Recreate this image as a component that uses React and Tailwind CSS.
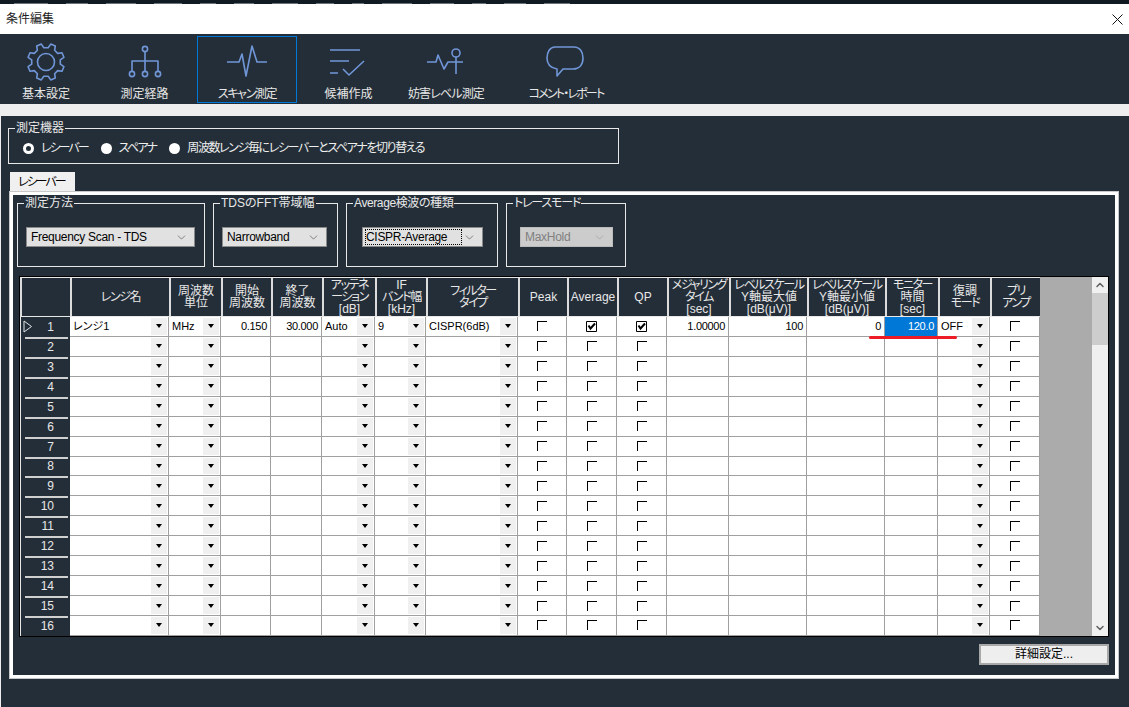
import { ChevronDown, ChevronUp } from "lucide-react"

const COLUMNS = [
  { w: "w-[99px]", head: ["レンジ名"], type: "drop" },
  { w: "w-[52px]", head: ["周波数", "単位"], type: "drop" },
  { w: "w-[50px]", head: ["開始", "周波数"], type: "text" },
  { w: "w-[51px]", head: ["終了", "周波数"], type: "text" },
  { w: "w-[53px]", head: ["アッテネ", "ーション", "[dB]"], type: "drop" },
  { w: "w-[51px]", head: ["IF", "バンド幅", "[kHz]"], type: "drop" },
  { w: "w-[92px]", head: ["フィルター", "タイプ"], type: "drop" },
  { w: "w-[49px]", head: ["Peak"], type: "check" },
  { w: "w-[50px]", head: ["Average"], type: "check" },
  { w: "w-[50px]", head: ["QP"], type: "check" },
  { w: "w-[62px]", head: ["メジャリング", "タイム", "[sec]"], type: "text" },
  { w: "w-[78px]", head: ["レベルスケール", "Y軸最大値", "[dB(μV)]"], type: "text" },
  { w: "w-[78px]", head: ["レベルスケール", "Y軸最小値", "[dB(μV)]"], type: "text" },
  { w: "w-[53px]", head: ["モニター", "時間", "[sec]"], type: "text" },
  { w: "w-[52px]", head: ["復調", "モード"], type: "drop" },
  { w: "w-[50px]", head: ["プリ", "アンプ"], type: "check" },
]

const FIRST_ROW = [
  "レンジ1", "MHz", "0.150", "30.000", "Auto", "9", "CISPR(6dB)", false, true, true,
  "1.00000", "100", "0", "120.0", "OFF", false,
]

const ROWS = Array.from({ length: 16 }, (_, i) => i + 1)
const TICKS = [34, 22, 30, 28, 16, 20, 26, 18, 12, 30, 24, 14, 22, 26]

// header lines with katakana are narrower in the picture
const headTrack = (line) => (/[ァ-ヶー]/.test(line) ? "tracking-[-1.4px]" : "")

const gearPath = (() => {
  const cx = 45, cy = 62
  const pts = []
  for (let i = 0; i < 8; i++) {
    const a = (i * Math.PI) / 4 - Math.PI / 8
    const step = Math.PI / 8
    const add = (r, t) => pts.push(`${(cx + r * Math.cos(t)).toFixed(1)} ${(cy + r * Math.sin(t)).toFixed(1)}`)
    add(14.5, a - step * 0.62)
    add(18.5, a - step * 0.34)
    add(18.5, a + step * 0.34)
    add(14.5, a + step * 0.62)
  }
  return "M" + pts.join("L") + "Z"
})()

function Icon({ box, children }) {
  return (
    <svg
      width="48"
      height="44"
      viewBox={box}
      fill="none"
      stroke="#7096d8"
      strokeWidth="1.6"
      strokeLinejoin="round"
      className="shrink-0"
    >
      {children}
    </svg>
  )
}

const TOOLS = [
  {
    label: "基本設定",
    w: "w-[92px]",
    track: "",
    icon: (
      <Icon box="21 40 48 44">
        <path d={gearPath} />
        <circle cx="45" cy="62" r="8.5" />
      </Icon>
    ),
  },
  {
    label: "測定経路",
    w: "w-[105px]",
    track: "",
    icon: (
      <Icon box="121 40 48 44">
        <circle cx="145" cy="49" r="2.6" />
        <circle cx="132" cy="74" r="2.6" />
        <circle cx="145" cy="74" r="2.6" />
        <circle cx="158" cy="74" r="2.6" />
        <path d="M145 52V71M132 71V61H158V71" />
      </Icon>
    ),
  },
  {
    label: "スキャン測定",
    w: "w-[100px]",
    track: "tracking-[-1.4px]",
    active: true,
    icon: (
      <Icon box="221 40 48 44">
        <path d="M225 62H237L240 54L244 76L250 46L255 62H265" />
      </Icon>
    ),
  },
  {
    label: "候補作成",
    w: "w-[103px]",
    track: "",
    icon: (
      <Icon box="325 40 48 44">
        <path d="M330 50H360M330 61H349M330 73H338M343 69L349 75L364 61" />
      </Icon>
    ),
  },
  {
    label: "妨害レベル測定",
    w: "w-[92px]",
    track: "tracking-[-0.85px]",
    icon: (
      <Icon box="422 40 48 44">
        <circle cx="456" cy="53" r="4" />
        <path d="M427 62H436L438 55L444 69L448 62H463M456 57V74" />
      </Icon>
    ),
  },
  {
    label: "コメント・レポート",
    w: "w-[148px]",
    track: "tracking-[-1.8px]",
    icon: (
      <Icon box="542 40 48 44">
        <path d="M555 47H574C580 47 583 52 583 58C583 65 579 69 573 69H563L557 76V69C551 68 547 64 547 58C547 52 550 47 555 47Z" />
      </Icon>
    ),
  },
]

function ToolItem({ tool }) {
  return (
    <div className={`${tool.w} flex flex-col items-center`}>
      <div
        className={`w-full h-[67px] mt-[2px] flex flex-col items-center border ${
          tool.active ? "border-[#0078d7]" : "border-transparent"
        }`}
      >
        <div className="mt-[3px]">{tool.icon}</div>
        <span className={`text-[12px] leading-[14px] text-[#e6e6e6] whitespace-nowrap mt-[3px] ${tool.track}`}>{tool.label}</span>
      </div>
    </div>
  )
}

function Group({ title, track, className, children }) {
  return (
    <fieldset className={`border border-[#e8e8e8] min-w-0 ${className}`}>
      <legend className={`ml-[6px] text-[12px] leading-[14px] text-[#e8e8e8] px-px ${track || ""}`}>{title}</legend>
      {children}
    </fieldset>
  )
}

function Radio({ label, selected, track }) {
  return (
    <label className="flex items-center gap-[7px] text-[12px] leading-[14px] text-[#eeeeee] whitespace-nowrap">
      <span
        className={`w-[11px] h-[11px] rounded-full ${
          selected ? "border-[3px] border-white bg-[#242e38]" : "bg-white"
        }`}
      />
      <span className={track}>{label}</span>
    </label>
  )
}

function Select({ value, className, focused, disabled }) {
  return (
    <div
      className={`h-[20px] flex items-center justify-between pl-[4px] pr-[6px] border text-[12px] tracking-[-0.3px] whitespace-nowrap ${className} ${
        disabled ? "bg-[#cccccc] border-[#bbbbbb] text-[#808080]" : "bg-[#e1e1e1] border-[#8a8a8a] text-black"
      }`}
    >
      <span className={focused ? "border border-dotted border-black leading-[14px] pr-[14px] -ml-[2px]" : ""}>{value}</span>
      <ChevronDown size={13} strokeWidth={1.3} className={disabled ? "text-[#a0a0a0]" : "text-[#555555]"} />
    </div>
  )
}

function DropButton() {
  return (
    <span className="absolute right-px top-px bottom-px w-[16px] bg-[#f0f0f0] flex items-center justify-center">
      <span className="w-0 h-0 border-x-[3.5px] border-t-[4px] border-x-transparent border-t-black" />
    </span>
  )
}

function CheckMark({ checked }) {
  if (checked) {
    return (
      <svg width="11" height="11" viewBox="0 0 11 11" fill="none" stroke="black">
        <path d="M0.5 10.5V0.5H10.5V10.5H0.5Z" strokeWidth="1" />
        <path d="M2.5 4.5L4.5 7.5L9 2.5" strokeWidth="2" />
      </svg>
    )
  }
  return <span className="block w-[10px] h-[10px] border-t border-l border-black" />
}

function Cell({ col, value, selected }) {
  const base = `${col.w} h-full shrink-0 border-r border-b border-[#a0a0a0] relative text-[11px] leading-[19px] whitespace-nowrap`
  if (col.type === "check") {
    return (
      <div className={`${base} bg-white flex items-center justify-center`}>
        <CheckMark checked={value === true} />
      </div>
    )
  }
  if (col.type === "drop") {
    return (
      <div className={`${base} bg-white text-black pl-[3px]`}>
        {value}
        <DropButton />
      </div>
    )
  }
  return (
    <div className={`${base} text-right pr-[3px] tracking-[-0.3px] ${selected ? "bg-[#0078d7] text-white" : "bg-white text-black"}`}>
      {value}
    </div>
  )
}

function GridTable() {
  return (
    <div className="relative ml-[6px] mt-[9px] w-[1090px] h-[361px] border border-black flex bg-[#ababab]">
      <div className="w-[1020px] shrink-0 flex flex-col">
        <div className="h-[40px] flex bg-[#242e38] border-t border-b border-[#e8e8e8] text-[#e8e8e8] text-[12px] leading-[12px]">
          <div className="w-[50px] shrink-0 border-l-2 border-[#dcdcdc]" />
          {COLUMNS.map((col, i) => (
            <div key={i} className={`${col.w} shrink-0 border-l-2 border-[#dcdcdc] flex flex-col items-center justify-center whitespace-nowrap`}>
              {col.head.map((line) => (
                <span key={line} className={headTrack(line)}>{line}</span>
              ))}
            </div>
          ))}
        </div>
        {ROWS.map((row) => (
          <div key={row} className="h-[20px] flex">
            <div className="w-[50px] h-full shrink-0 bg-[#242e38] border-l border-[#e8e8e8] relative flex items-center justify-end pr-[16px] text-[12px] text-[#e8e8e8]">
              {row > 1 && <span className="absolute left-[4px] right-[2px] top-0 h-[2px] bg-[#d0d0d0]" />}
              {row === 1 && (
                <svg width="10" height="13" viewBox="0 0 10 13" fill="none" stroke="#dfe3e6" className="absolute left-[2px] top-[3px]">
                  <path d="M1 1L8.5 6.5L1 12Z" />
                </svg>
              )}
              {row}
            </div>
            {COLUMNS.map((col, i) => (
              <Cell key={i} col={col} value={row === 1 ? FIRST_ROW[i] : ""} selected={row === 1 && i === 13} />
            ))}
          </div>
        ))}
      </div>
      <div className="flex-1" />
      <div className="w-[16px] shrink-0 bg-[#f0f0f0] flex flex-col items-center">
        <div className="h-[16px] flex items-center justify-center">
          <ChevronUp size={12} strokeWidth={3} className="text-[#606060]" />
        </div>
        <div className="w-full h-[52px] bg-[#cdcdcd]" />
        <div className="flex-1" />
        <div className="h-[16px] flex items-center justify-center">
          <ChevronDown size={12} strokeWidth={3} className="text-[#606060]" />
        </div>
      </div>
      {/* red marker drawn over the first row */}
      <span className="absolute left-[849px] top-[59px] w-[88px] h-[3px] rounded-full bg-[#ed1c24]" />
    </div>
  )
}

export default function App() {
  return (
    <div className="w-[1129px] h-[707px] overflow-hidden flex flex-col bg-[#242e38] font-['Liberation_Sans','Noto_Sans_CJK_JP',sans-serif] [font-feature-settings:'palt']">
      <div className="h-[4px] bg-[#101a22] flex items-end gap-[18px] pl-[14px]">
        {TICKS.map((w, i) => (
          <span key={i} style={{ width: w }} className="h-px bg-[#6b7278]" />
        ))}
      </div>

      <div className="h-[30px] bg-white flex items-center justify-between pl-[6px] pr-[6px]">
        <span className="text-[12px] text-[#222222]">条件編集</span>
        <svg width="11" height="11" viewBox="0 0 11 11" stroke="#111111" strokeWidth="1">
          <path d="M0.5 0.5L10.5 10.5M10.5 0.5L0.5 10.5" />
        </svg>
      </div>

      <div className="h-[70px] bg-[#242e38] flex">
        {TOOLS.map((tool) => (
          <ToolItem key={tool.label} tool={tool} />
        ))}
      </div>

      <div className="h-[12px] bg-[#eeeeee]" />

      <div className="flex-1 border-l border-[#eeeeee] pl-[7px] pt-[5px]">
        <Group title="測定機器" className="w-[611px] h-[43px]">
          <div className="flex gap-[13px] pl-[14px] pt-[6px]">
            <Radio label="レシーバー" selected track="tracking-[-2px]" />
            <Radio label="スペアナ" track="tracking-[-1.7px]" />
            <Radio label="周波数レンジ毎にレシーバーとスペアナを切り替える" track="tracking-[-1.4px]" />
          </div>
        </Group>

        <div className="ml-[2px] mt-[8px] w-[65px] h-[20px] bg-[#f0f0f0] text-[12px] leading-[20px] tracking-[-2px] text-left pl-[8px] text-black">
          レシーバー
        </div>

        <div className="ml-[2px] w-[1108px] h-[486px] border-[3px] border-white shadow-[0_0_0_1px_#c8c8c8] pt-px">
          <div className="flex gap-[8px] pl-[4px]">
            <Group title="測定方法" className="w-[188px] h-[71px]">
              <Select value="Frequency Scan - TDS" className="w-[169px] ml-[8px] mt-[17px]" />
            </Group>
            <Group title="TDSのFFT帯域幅" className="w-[125px] h-[71px]">
              <Select value="Narrowband" className="w-[105px] ml-[8px] mt-[17px]" />
            </Group>
            <Group title="Average検波の種類" track="tracking-[-0.4px]" className="w-[152px] h-[71px]">
              <Select value="CISPR-Average" focused className="w-[121px] ml-[15px] mt-[17px]" />
            </Group>
            <Group title="トレースモード" track="tracking-[-1.2px]" className="w-[120px] h-[71px]">
              <Select value="MaxHold" disabled className="w-[93px] ml-[13px] mt-[17px]" />
            </Group>
          </div>

          <GridTable />

          <div className="flex justify-end mt-[7px] mr-[6px]">
            <button className="w-[130px] h-[21px] bg-[#eeeeee] border-2 border-[#a8a8a8] text-[12px] leading-[15px] text-black">
              詳細設定...
            </button>
          </div>
        </div>
      </div>
    </div>
  )
}
